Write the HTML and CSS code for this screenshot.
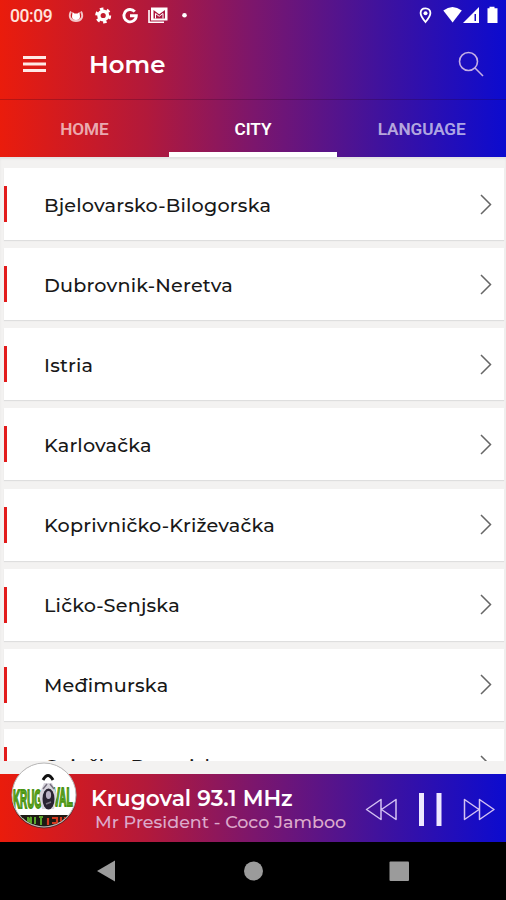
FILE: index.html
```html
<!DOCTYPE html>
<html lang="hr">
<head>
<meta charset="utf-8">
<title>Home</title>
<link rel="stylesheet" href="styles.css">
</head>
<body>
<div class="app">
  <header class="header">
    <div class="status">
      <span class="clock">00:09</span>
      <svg class="status-left" width="140" height="32" viewBox="60 0 140 32" fill="#fff">
        <path d="M71 11.500C68 17 71 21 76 21S84 17 81 11.500" fill="none" stroke="#fff" stroke-width="2" opacity=".75"/>
        <path d="M72.500 12l2 1.500h3l2-1.500.5 4.500a4 3.500 0 0 1-8 0z"/>
        <g fill="none" stroke="#fff"><circle cx="103.200" cy="15.500" r="4.300" stroke-width="3.400"/><circle cx="103.200" cy="15.500" r="6.700" stroke-width="2.600" stroke-dasharray="3.500 3.516"/></g>
        <path d="M134.800 11.600A6.200 6.200 0 1 0 136.300 15.800H130" fill="none" stroke="#fff" stroke-width="2.900"/>
        <path d="M149 10v12.300h15" fill="none" stroke="#fff" stroke-width="1.600"/>
        <path fill-rule="evenodd" d="M151 7.500h16.500v13H151zM153.500 18.500V10l5.700 4.300L165 10v8.500z"/>
        <path d="M155.500 18.500v-5l3.700 2.800 3.800-2.800v5" fill="none" stroke="#fff"/>
        <circle cx="184.500" cy="15.200" r="2.300"/>
      </svg>
      <svg class="status-right" width="86" height="32" viewBox="416 0 86 32" fill="#fff">
        <path d="M425.500 8.300c-3 0-4.900 2-4.900 4.700 0 3.200 4.900 9 4.900 9s4.900-5.800 4.900-9c0-2.700-1.900-4.700-4.900-4.700z" fill="none" stroke="#fff" stroke-width="1.800"/><circle cx="425.500" cy="13.200" r="2"/>
        <path d="M443.300 10.500Q452.500 3.500 461.800 10.500L452.600 22.500z"/>
        <path fill-rule="evenodd" d="M479 7v16h-16zM474.500 14v7h1.500v-7z"/>
        <path d="M489.500 6.800h5v1.500h3V23h-10V8.300h2z"/>
      </svg>
    </div>
    <div class="toolbar">
      <svg class="menu" width="24" height="20" viewBox="0 0 24 20" fill="#ffe9e6"><path d="M0 2h23v3H0zM0 8.500h23v3H0zM0 15h23v3H0z"/></svg>
      <h1 class="title">Home</h1>
      <svg class="search" width="26" height="26" viewBox="0 0 26 26" fill="none" stroke="#c5afe5" stroke-width="1.600"><circle cx="10.500" cy="10.500" r="9"/><path d="M17 17l8 8"/></svg>
    </div>
    <nav class="tabs">
      <span class="tab">HOME</span>
      <span class="tab active">CITY</span>
      <span class="tab">LANGUAGE</span>
    </nav>
  </header>

  <main class="list">
    <div class="card"><span class="name">Bjelovarsko-Bilogorska</span><svg class="chev" viewBox="0 0 12 21"><path d="M1 1l9.500 9.500L1 20"/></svg></div>
    <div class="card"><span class="name">Dubrovnik-Neretva</span><svg class="chev" viewBox="0 0 12 21"><path d="M1 1l9.500 9.500L1 20"/></svg></div>
    <div class="card"><span class="name">Istria</span><svg class="chev" viewBox="0 0 12 21"><path d="M1 1l9.500 9.500L1 20"/></svg></div>
    <div class="card"><span class="name">Karlovačka</span><svg class="chev" viewBox="0 0 12 21"><path d="M1 1l9.500 9.500L1 20"/></svg></div>
    <div class="card"><span class="name">Koprivničko-Križevačka</span><svg class="chev" viewBox="0 0 12 21"><path d="M1 1l9.500 9.500L1 20"/></svg></div>
    <div class="card"><span class="name">Ličko-Senjska</span><svg class="chev" viewBox="0 0 12 21"><path d="M1 1l9.500 9.500L1 20"/></svg></div>
    <div class="card"><span class="name">Međimurska</span><svg class="chev" viewBox="0 0 12 21"><path d="M1 1l9.500 9.500L1 20"/></svg></div>
    <div class="card"><span class="name">Osječko-Baranjska</span><svg class="chev" viewBox="0 0 12 21"><path d="M1 1l9.500 9.500L1 20"/></svg></div>
  </main>

  <section class="player">
    <svg class="cover" width="68" height="70" viewBox="0 0 68 70">
      <defs><clipPath id="disc"><circle cx="34" cy="34" r="31.500"/></clipPath></defs>
      <circle cx="34" cy="35" r="32.500" fill="#5d2525"/>
      <circle cx="34" cy="34" r="32" fill="#fff" stroke="#b8b8b8"/>
      <g clip-path="url(#disc)">
        <g class="logo-text"><text transform="translate(3 47) scale(.82 2.200)">KRUG</text><text transform="translate(43 45) scale(.86 2.200)">VAL</text></g>
        <path d="M33 19q5-9 10 0" fill="none" stroke="#111" stroke-width="3"/>
        <path d="M34 22h8l5 12-3 14h-12l-3-14z" fill="#d8d5dd"/>
        <ellipse cx="38.500" cy="38" rx="6" ry="10.500" fill="#292331"/>
        <ellipse cx="38.500" cy="34" rx="2.600" ry="4" fill="#b9b1c4"/>
        <path d="M33 28l4-5M44 28l-4-5M36 43l5-2" stroke="#77717f" stroke-width="1.500"/>
        <path d="M5 54h58v14H5z" fill="#1d1a14"/>
        <path d="M13 57v7M18 56v6l3-6v8M25 56v7M29 56h4M31 56v8" stroke="#5aa52b" stroke-width="2" fill="none"/>
        <path d="M38 57v7M42 57h5v5h-5M51 56v6M55 56v5" stroke="#d43a20" stroke-width="2.200" fill="none"/>
      </g>
    </svg>
    <div class="track">
      <div class="station">Krugoval 93.1 MHz</div>
      <div class="song">Mr President - Coco Jamboo</div>
    </div>
    <svg class="controls" width="140" height="68" viewBox="360 774 140 68" fill="none" stroke="#d3c1f3" stroke-width="1.500" stroke-linejoin="round">
      <path d="M381 799.500v20L366.500 809.500zM396 799.500v20L381.500 809.500z"/>
      <path d="M464.500 799.500v20L479 809.500zM479.500 799.500v20L494 809.500z"/>
      <path d="M421.500 793v33M439 793v33" stroke="#eee8ff" stroke-width="5"/>
    </svg>
  </section>

  <footer class="navbar">
    <svg width="506" height="58" viewBox="0 842 506 58" fill="#9b9b9b"><path d="M97 871l18-10.500v21z"/><circle cx="253.500" cy="871" r="9.500"/><rect x="389.500" y="861.500" width="19.500" height="19.500" rx="1"/></svg>
  </footer>
</div>
</body>
</html>
```
FILE: styles.css
```css
* { box-sizing: border-box; }
body { margin: 0; background: #000; }
.app {
  width: 506px;
  height: 900px;
  display: flex;
  flex-direction: column;
  overflow: hidden;
  background: #f3f2f1;
  font-family: Montserrat, Inter, "Liberation Sans", sans-serif;
}
.header, .player { background: linear-gradient(90deg, #ea1c0c 0%, #b2193b 29%, #7c166c 50%, #40129d 75%, #0c0bcf 100%); }
.header { height: 157px; flex: none; }
.status { height: 32px; display: flex; align-items: center; padding-left: 10px; }
.clock { width: 50px; font: 500 17.500px/32px Roboto, sans-serif; letter-spacing: -.4px; color: #ffe3dc; }
.status-right { margin-left: auto; margin-right: 4px; }
.toolbar { height: 68px; display: flex; align-items: center; padding: 0 22px 4px 23px; border-bottom: 1px solid rgba(40, 0, 30, .25); }
.title { margin: 0 auto 0 42px; font-size: 24.400px; font-weight: 600; line-height: 32px; color: #fff; }
.tabs { height: 58px; display: grid; grid-template-columns: repeat(3, 1fr); }
.tab { height: 58px; text-align: center; font: 600 17.200px/58px Roboto, sans-serif; letter-spacing: -.1px; color: rgba(255, 255, 255, .65); }
.tab.active { color: #fff; border-bottom: 6px solid #fff; }
.list { height: 604px; flex: none; overflow: hidden; padding: 11px 2.500px 0 3.500px; box-shadow: inset 0 2px 2px #e2e2e2; }
.card {
  height: 72px;
  margin-bottom: 8.170px;
  display: flex;
  align-items: center;
  background: #fff;
  box-shadow: 0 1px 1px #dedede;
}
.card::before { content: ""; width: 3.500px; height: 36px; background: #e21b1b; }
.name { margin: 0 auto 0 37px; padding-top: 1px; font-size: 19.200px; font-weight: 500; letter-spacing: .2px; line-height: 28px; color: #181818; white-space: nowrap; }
.chev { width: 12px; height: 21px; margin-right: 12px; fill: none; stroke: #666; stroke-width: 1.500; }
.player { position: relative; height: 68px; margin-top: 13px; flex: none; display: flex; align-items: center; padding: 0 6px 0 91px; }
.cover { position: absolute; left: 10px; top: -13px; }
.logo-text { font: 900 12px "Liberation Sans", sans-serif; fill: #63a820; stroke: #4b9416; stroke-width: .9px; }
.track { margin-right: auto; padding-top: 3px; white-space: nowrap; }
.station { font-size: 21.800px; font-weight: 600; line-height: 24px; color: #fff; }
.song { margin-left: 4px; font-size: 17.500px; font-weight: 500; line-height: 23px; color: #dcaacb; }
.navbar { height: 58px; flex: none; background: #000; }
```
